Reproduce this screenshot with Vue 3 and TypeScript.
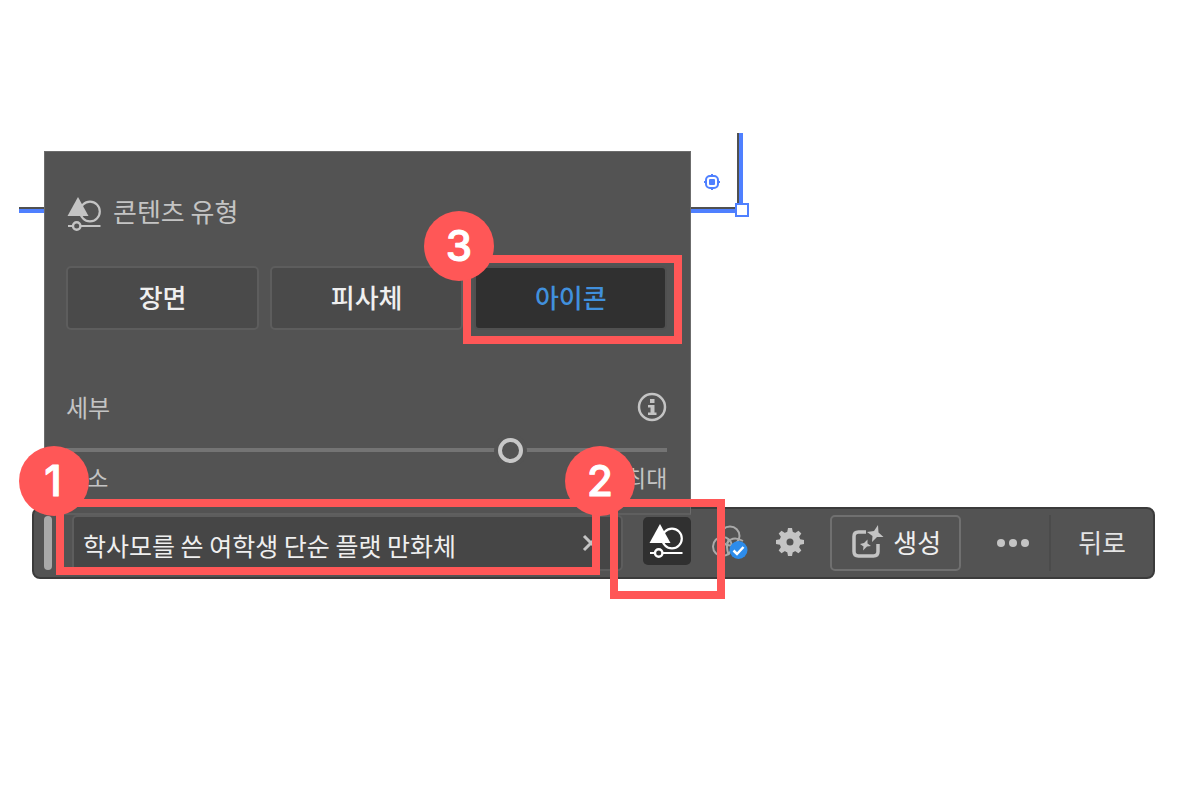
<script setup lang="ts">
import { ref } from 'vue'

const kinds = ['장면', '피사체', '아이콘']
const selected = ref('아이콘')
const detail = ref(75)
const prompt = ref('학사모를 쓴 여학생 단순 플랫 만화체')
const teeth = [0, 45, 90, 135, 180, 225, 270, 315]
</script>

<template>
  <main class="stage">
    <div class="artboard">
      <span class="corner"></span>
      <svg class="target" viewBox="0 0 18 18" aria-hidden="true">
        <rect x="3" y="3" width="12" height="12" rx="4" fill="none" stroke="#4f80ff" stroke-width="2" />
        <rect x="6" y="6" width="6" height="6" rx="1" fill="#4f80ff" />
        <path d="M9 1v2M9 15v2M1 9h2M15 9h2" stroke="#4f80ff" stroke-width="2" />
      </svg>
    </div>

    <section class="panel">
      <h2 class="title">
        <svg class="type-icon" viewBox="0 0 34 34" aria-hidden="true">
          <circle cx="22" cy="14.5" r="9.8" fill="none" stroke="currentColor" stroke-width="2.2" />
          <path d="M10 0 20.500 19H-.5z" fill="currentColor" />
          <path d="M0 29h4.500M12.500 29H32.500" stroke="currentColor" stroke-width="2.200" />
          <circle cx="8.700" cy="29" r="3.700" fill="none" stroke="currentColor" stroke-width="2.400" />
        </svg>
        <span>콘텐츠 유형</span>
      </h2>
      <div class="kinds">
        <div v-for="kind in kinds" :key="kind" class="kind-cell">
          <button type="button" class="kind" :class="{ active: kind === selected }" @click="selected = kind">
            {{ kind }}
          </button>
          <template v-if="kind === '아이콘'">
            <span class="mark mark-kind"></span>
            <svg class="badge badge-kind" viewBox="0 0 70 70"><circle cx="35" cy="35" r="35" /><text x="35" y="50">3</text></svg>
          </template>
        </div>
      </div>
      <div class="detail-head">
        <label for="detail">세부</label>
        <button type="button" class="plain info" aria-label="정보">
          <svg viewBox="0 0 30 30" width="30" height="30">
            <circle cx="15" cy="15" r="13" fill="none" stroke="#c4c4c4" stroke-width="2.500" />
            <path d="M13 7h4.500v4H13zM11 13h6.500v7.500h2V23h-8.500v-2.500h2.500v-5H11z" fill="#c4c4c4" />
          </svg>
        </button>
      </div>
      <input id="detail" v-model="detail" class="slider" type="range" min="0" max="100" />
      <div class="range-labels"><span>최소</span><span>최대</span></div>
    </section>

    <div class="toolbar">
      <span class="grip"></span>
      <div class="field">
        <input v-model="prompt" class="prompt" type="text" aria-label="프롬프트" />
        <button type="button" class="plain clear" aria-label="지우기" @click="prompt = ''">
          <svg viewBox="0 0 18 18" width="18" height="18">
            <path d="M2 2l14 14M16 2L2 16" stroke="#c4c4c4" stroke-width="3" />
          </svg>
        </button>
        <span class="mark mark-field"></span>
        <svg class="badge badge-field" viewBox="0 0 70 70"><circle cx="35" cy="35" r="35" /><text x="34" y="50">1</text></svg>
      </div>
      <div class="type-cell">
        <button type="button" class="type-button" aria-label="콘텐츠 유형">
          <svg class="type-icon" viewBox="0 0 34 34">
            <circle cx="22" cy="14.5" r="9.8" fill="none" stroke="currentColor" stroke-width="2.2" />
            <path d="M10 0 20.500 19H-.5z" fill="currentColor" />
            <path d="M0 29h4.500M12.500 29H32.500" stroke="currentColor" stroke-width="2.200" />
            <circle cx="8.700" cy="29" r="3.700" fill="none" stroke="currentColor" stroke-width="2.400" />
          </svg>
        </button>
        <span class="mark mark-type"></span>
        <svg class="badge badge-type" viewBox="0 0 70 70"><circle cx="35" cy="35" r="35" /><text x="35" y="50">2</text></svg>
      </div>
      <button type="button" class="plain style" aria-label="스타일">
        <svg viewBox="0 0 36 36" width="36" height="36">
          <g fill="none" stroke="#aaa" stroke-width="2">
            <circle cx="18" cy="11" r="9.500" />
            <circle cx="10.500" cy="21.500" r="9.500" />
            <path d="M15 18Q21 10 31 16" />
            <path d="M17 14Q13 22 17 30" />
          </g>
          <circle cx="26.500" cy="25" r="9" fill="#2d8ceb" />
          <path d="M21.500 25.500l3.500 3.500 6.500-7" fill="none" stroke="#fff" stroke-width="2.500" />
        </svg>
      </button>
      <button type="button" class="plain gear" aria-label="설정">
        <svg viewBox="-14 -14 28 28" width="28" height="28">
          <circle r="7" fill="none" stroke="#c4c4c4" stroke-width="7" />
          <path v-for="a in teeth" :key="a" d="M-3 -9 -2 -14H2L3 -9z" fill="#c4c4c4" :transform="`rotate(${a})`" />
        </svg>
      </button>
      <button type="button" class="generate">
        <svg viewBox="0 0 34 34" width="34" height="34" aria-hidden="true">
          <path d="M16 7H8.500Q4 7 4 11.500V26.500Q4 31 8.500 31H23.500Q28 31 28 26.500V19" fill="none" stroke="#c4c4c4" stroke-width="3.500" />
          <path d="M28 0 28.500 7.500 33.500 12 27 12 22 17 22.500 11 17 7 24 6z" fill="#c4c4c4" />
          <path d="M17.500 14.500 17.500 18.500 21 21 17 21.500 13 25.500 13.500 21.500 10 19 14 18z" fill="#c4c4c4" />
        </svg>
        <span>생성</span>
      </button>
      <button type="button" class="plain more" aria-label="더 보기">
        <svg viewBox="0 0 32 8" width="32" height="8" fill="#c4c4c4">
          <circle cx="4" cy="4" r="4" /><circle cx="16" cy="4" r="4" /><circle cx="28" cy="4" r="4" />
        </svg>
      </button>
      <span class="divider"></span>
      <button type="button" class="plain back">뒤로</button>
    </div>
  </main>
</template>

<style>
body {
  background: #fff;
}
</style>

<style scoped>
.stage {
  position: relative;
  box-sizing: border-box;
  min-height: 100vh;
  padding: 151px 45px 40px 32px;
  font-family: "Noto Sans CJK KR", sans-serif;
  font-size: 26px;
  line-height: 36px;
  color: #c4c4c4;
}
button,
input {
  box-sizing: border-box;
  margin: 0;
  font-family: inherit;
}
svg {
  display: block;
  flex: none;
  overflow: visible;
}
.plain {
  display: block;
  flex: none;
  padding: 0;
  border: 0;
  background: none;
}
.artboard {
  position: absolute;
  top: 133px;
  left: 19px;
  box-sizing: border-box;
  width: calc(60% + 4px);
  height: 80px;
  border: solid #4f80ff;
  border-width: 0 4px 4px 0;
  box-shadow: inset -2px -2px #505050;
}
.corner {
  position: absolute;
  right: -10px;
  bottom: -8px;
  box-sizing: border-box;
  width: 14px;
  height: 14px;
  border: 2px solid #4f80ff;
  background: #fff;
}
.target {
  position: absolute;
  right: 18px;
  top: 40px;
  width: 18px;
  height: 18px;
}
.panel {
  position: relative;
  z-index: 1;
  box-sizing: border-box;
  width: calc(58% - 4px);
  margin-left: 12px;
  padding: 42px 23px 16px 21px;
  border: 1px solid #6c6c6c;
  border-bottom: 2px solid #5f5f5f;
  background: #535353;
}
.title {
  display: flex;
  align-items: center;
  gap: 11px;
  height: 36px;
  margin: 0 0 36px;
  padding-left: 2px;
  font-size: 26px;
  font-weight: 400;
}
.title .type-icon {
  margin-top: 4px;
}
.title span {
  padding-bottom: 2px;
}
.type-icon {
  width: 34px;
  height: 34px;
}
.kinds {
  display: grid;
  grid-template-columns: repeat(3, 1fr);
  gap: 11px;
}
.kind-cell {
  position: relative;
}
.kind {
  display: block;
  width: 100%;
  height: 64px;
  padding: 0 0 4px;
  border: 2px solid #5d5d5d;
  border-radius: 5px;
  background: #4a4a4a;
  color: #efefef;
  font-size: 26px;
  font-weight: 500;
}
.kind.active {
  background: #303030;
  border-color: #505050;
  color: #4190dd;
}
.detail-head {
  display: flex;
  align-items: center;
  justify-content: space-between;
  height: 36px;
  margin-top: 59px;
  font-size: 24px;
}
.slider {
  display: block;
  width: 100%;
  height: 26px;
  margin-top: 12px;
  appearance: none;
  background: none;
}
.slider::-webkit-slider-runnable-track {
  height: 4px;
  background: #747474;
}
.slider::-webkit-slider-thumb {
  appearance: none;
  box-sizing: border-box;
  width: 25px;
  height: 25px;
  margin-top: -10px;
  border: 4px solid #c8c8c8;
  border-radius: 50%;
  background: #535353;
  box-shadow: 0 0 0 4px #535353;
}
.range-labels {
  display: flex;
  justify-content: space-between;
  height: 34px;
  font-size: 23px;
  line-height: 28px;
}
.toolbar {
  display: flex;
  align-items: center;
  box-sizing: border-box;
  height: 72px;
  margin-top: -8px;
  padding-left: 10px;
  border: 2px solid #3b3b3b;
  border-radius: 8px;
  background: #535353;
}
.grip {
  flex: none;
  width: 8px;
  height: 54px;
  border-radius: 4px;
  background: #a9a9a9;
}
.field {
  position: relative;
  display: flex;
  flex: 1;
  align-items: center;
  box-sizing: border-box;
  min-width: 0;
  height: 56px;
  margin-left: 20px;
  padding: 0 21px 0 9px;
  border: 2px solid #5d5d5d;
  border-radius: 5px;
  background: #464646;
}
.prompt {
  flex: 1;
  min-width: 0;
  height: 48px;
  padding: 4px 0 0;
  border: 0;
  outline: 0;
  background: none;
  color: #efefef;
  font-size: 25px;
}
.type-cell {
  position: relative;
  flex: none;
  margin: 0 21px 4px 20px;
}
.type-button {
  display: grid;
  place-items: center;
  width: 48px;
  height: 48px;
  padding: 0;
  border: 0;
  border-radius: 5px;
  background: #303030;
  color: #fff;
}
.gear {
  margin: 0 26px 2px 28px;
}
.generate {
  display: flex;
  flex: none;
  align-items: center;
  gap: 9px;
  height: 56px;
  padding: 0 18px;
  border: 2px solid #707070;
  border-radius: 5px;
  background: none;
  color: #efefef;
  font-size: 26px;
}
.generate svg {
  margin-bottom: 2px;
}
.generate span {
  padding-bottom: 4px;
}
.more {
  margin: 0 20px 0 36px;
}
.divider {
  flex: none;
  width: 2px;
  height: 56px;
  background: #4b4b4b;
}
.back {
  padding: 0 27px 4px;
  color: #e4e4e4;
  font-size: 26px;
}
.mark {
  position: absolute;
  z-index: 3;
  box-sizing: border-box;
  border: 8px solid #ff5757;
  pointer-events: none;
}
.badge {
  position: absolute;
  z-index: 4;
  width: 70px;
  height: 70px;
  pointer-events: none;
}
.badge circle {
  fill: #ff5757;
}
.badge text {
  fill: #fff;
  stroke: #fff;
  stroke-width: 1px;
  stroke-linejoin: round;
  text-anchor: middle;
  font-family: Inter, sans-serif;
  font-size: 42px;
  font-weight: 500;
}
.mark-kind {
  inset: -11px -15px -14px -11px;
}
.badge-kind {
  top: -55px;
  left: -50px;
}
.mark-field {
  inset: -18px 21px -6px -18px;
}
.badge-field {
  top: -71px;
  left: -55px;
}
.mark-type {
  inset: -18px -34px -34px -33px;
}
.badge-type {
  top: -71px;
  left: -78px;
}
</style>
